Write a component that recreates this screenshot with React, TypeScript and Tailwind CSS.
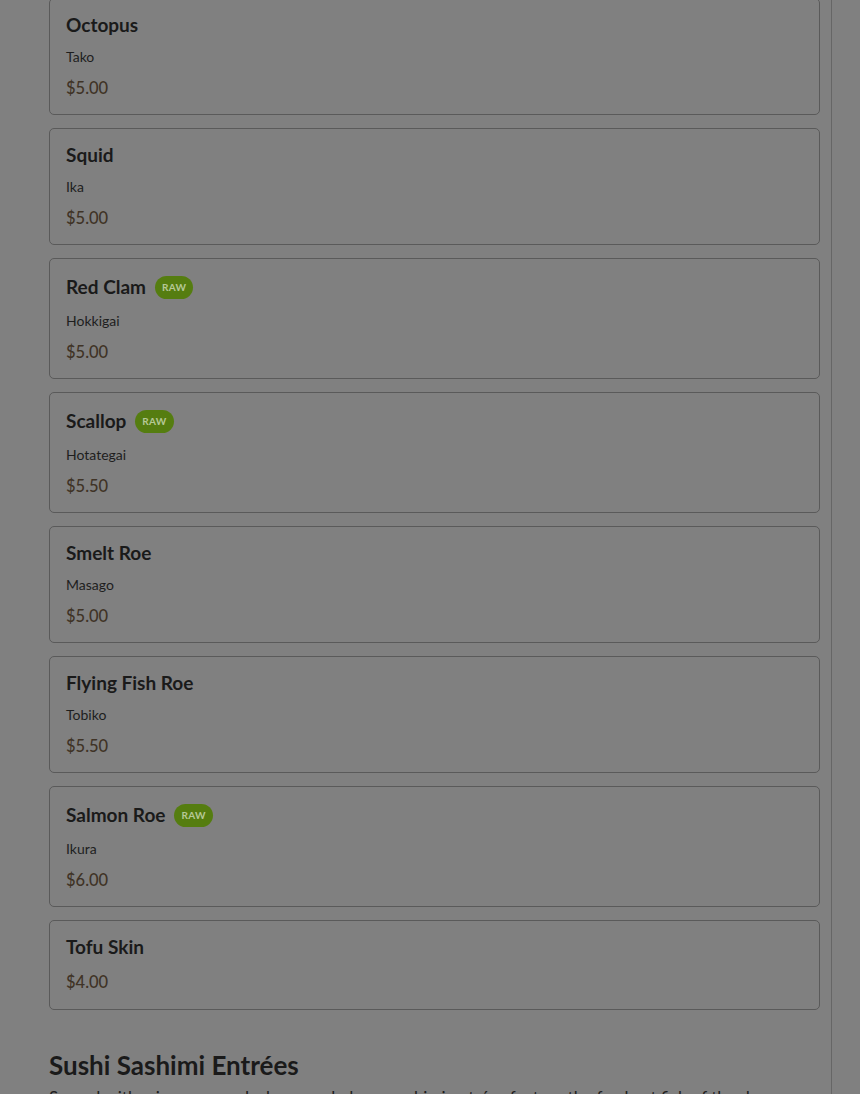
import React from "react";

type Item = { name: string; sub?: string; price: string; raw?: boolean };

const items: Item[] = [
  { name: "Octopus", sub: "Tako", price: "$5.00" },
  { name: "Squid", sub: "Ika", price: "$5.00" },
  { name: "Red Clam", sub: "Hokkigai", price: "$5.00", raw: true },
  { name: "Scallop", sub: "Hotategai", price: "$5.50", raw: true },
  { name: "Smelt Roe", sub: "Masago", price: "$5.00" },
  { name: "Flying Fish Roe", sub: "Tobiko", price: "$5.50" },
  { name: "Salmon Roe", sub: "Ikura", price: "$6.00", raw: true },
  { name: "Tofu Skin", price: "$4.00" },
];

function Card({ item, first }: { item: Item; first?: boolean }) {
  return (
    <div
      className={
        "rounded-[5px] border border-[#5a5a5a] bg-[#808080] px-4 pt-4 " +
        (item.sub ? "pb-[14px] " : "pb-[15px] ") +
        (first ? "-mt-[2px]" : "")
      }
    >
      {item.raw ? (
        <div className="flex h-6 items-center gap-[9px]">
          <span className="text-[19px] font-bold leading-5 text-[#1a1a1a]">{item.name}</span>
          <span className="flex h-[23px] items-center rounded-full bg-[#557d10] px-[7px] text-[10px] font-bold leading-none tracking-[0.3px] text-[#b5c896]">
            RAW
          </span>
        </div>
      ) : (
        <div className="text-[19px] font-bold leading-5 text-[#1a1a1a]">{item.name}</div>
      )}
      {item.sub && (
        <div className="mt-3 text-[14px] leading-5 text-[#1e1e1e]">{item.sub}</div>
      )}
      <div
        className={
          "text-[16.5px] font-medium leading-6 text-[#3f3326] " + (item.sub ? "mt-[9px]" : "mt-[13px]")
        }
      >
        {item.price}
      </div>
    </div>
  );
}

export default function App() {
  return (
    <div
      className="min-h-screen w-full overflow-hidden bg-[#808080]"
      style={{ fontFamily: "Lato, 'Noto Sans', sans-serif" }}
    >
      <div className="mr-[28px] h-[1094px] overflow-hidden border-r border-[#666666] pl-[49px] pr-[11px]">
        <div className="flex flex-col gap-[13px]">
          {items.map((it, i) => (
            <Card key={it.name} item={it} first={i === 0} />
          ))}
        </div>
        <h2 className="mt-[39px] text-[26px] font-bold leading-8 text-[#1a1a1a]">
          Sushi Sashimi Entrées
        </h2>
        <p className="mt-[3px] pr-[30px] text-[17px] leading-7 text-[#1e1e1e]">
          Served with miso soup and a house salad, our sashimi entrées feature the freshest fish of the day, hand cut.
        </p>
      </div>
    </div>
  );
}
